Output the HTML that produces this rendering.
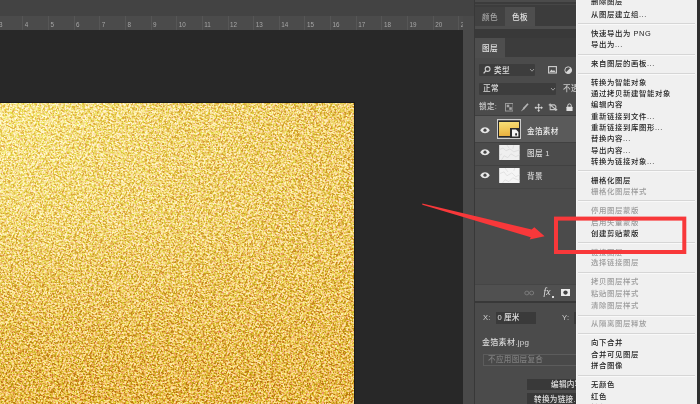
<!DOCTYPE html>
<html lang="zh-CN">
<head>
<meta charset="utf-8">
<title>创建剪贴蒙版</title>
<style>
*{box-sizing:border-box;margin:0;padding:0}
html,body{width:700px;height:404px;overflow:hidden;background:#4a4a4a}
body{position:relative;font-family:"Liberation Sans","Noto Sans CJK SC",sans-serif;font-size:8px;color:#d6d6d6}
.abs,.p{position:absolute}
#ui{position:absolute;left:0;top:0;width:700px;height:404px;will-change:transform}
#topbar{left:0;top:0;width:474px;height:16px;background:#434343}
#ruler{left:0;top:15.5px;width:463px;height:14.7px;background:#4b4b4b;overflow:hidden}
#ruler span{position:absolute;top:0;height:15px;font-size:6.3px;line-height:9px;color:#a6a6a6;padding:4.7px 0 0 1.5px;border-left:1px solid #565656}
#canvas{left:0;top:30px;width:463px;height:374px;background:#282828}
#gold{left:0;top:102px;width:355px;height:302px;border-top:1px solid #1a1a1a;border-right:1px solid #1a1a1a;overflow:hidden}
#strip{left:463px;top:15.5px;width:11px;height:389px;background:#494949}
#strip2{left:473.6px;top:0;width:2px;height:404px;background:#383838}
#panel{left:475px;top:0;width:225px;height:404px;background:#4b4b4b;overflow:hidden}
#panel .p{white-space:nowrap}
.t{line-height:12px;height:12px;font-weight:500;font-size:7.6px;letter-spacing:0.3px}
#menu{left:576.2px;top:0;width:120.8px;box-shadow:inset 1px 0 0 #f6f6f6;height:404px;background:#f0f0f0;color:#1c1c1c;font-size:7.4px;letter-spacing:0.6px;font-weight:500;overflow:hidden}
#menu div{position:absolute;left:14.8px;white-space:nowrap;line-height:12px;height:12px}
#menu div.d{color:#9c9c9c}
#menu i{position:absolute;left:2px;width:116.8px;height:1px;background:#d6d6d6;display:block;box-shadow:0 1px 0 #f9f9f9}
#edge{left:697px;top:0;width:3px;height:404px;background:#2f2f2f}
#anno{left:0;top:0;width:700px;height:404px}
</style>
</head>
<body>
<div id="ui">
<div id="topbar" class="abs"></div>
<div id="ruler" class="abs"><span style="left:-3.4px">3</span><span style="left:22.3px">4</span><span style="left:47.9px">5</span><span style="left:73.6px">6</span><span style="left:99.2px">7</span><span style="left:124.9px">8</span><span style="left:150.5px">9</span><span style="left:176.2px">10</span><span style="left:201.8px">11</span><span style="left:227.5px">12</span><span style="left:253.2px">13</span><span style="left:278.8px">14</span><span style="left:304.4px">15</span><span style="left:330.1px">16</span><span style="left:355.7px">17</span><span style="left:381.4px">18</span><span style="left:407.0px">19</span><span style="left:432.7px">20</span><span style="left:458.3px">21</span></div>
<div id="canvas" class="abs"></div>
<div id="gold" class="abs">
<svg width="354" height="301" viewBox="0 0 354 301" style="display:block">
<defs>
<radialGradient id="gr" cx="0" cy="0.05" r="1.05">
<stop offset="0" stop-color="#fff"/>
<stop offset="0.5" stop-color="#acacac"/>
<stop offset="0.93" stop-color="#767676"/>
<stop offset="1" stop-color="#6c6c6c"/>
</radialGradient>
<linearGradient id="gg" x1="0" y1="0" x2="0" y2="1">
<stop offset="0" stop-color="#000" stop-opacity="0"/>
<stop offset="0.39" stop-color="#000" stop-opacity="0.1"/>
<stop offset="0.7" stop-color="#000" stop-opacity="0.55"/>
<stop offset="0.93" stop-color="#000" stop-opacity="0.94"/>
<stop offset="1" stop-color="#000" stop-opacity="1"/>
</linearGradient>
<mask id="gm" maskUnits="userSpaceOnUse" x="0" y="0" width="354" height="301"><rect width="354" height="301" fill="url(#gr)"/><rect width="354" height="301" fill="url(#gg)"/></mask>
<filter id="gn" x="0" y="0" width="100%" height="100%" color-interpolation-filters="sRGB">
<feTurbulence type="fractalNoise" baseFrequency="0.68" numOctaves="2" seed="11" result="a"/>
<feTurbulence type="fractalNoise" baseFrequency="0.3" numOctaves="2" seed="5" result="b"/>
<feComposite in="a" in2="b" operator="arithmetic" k1="0" k2="0.88" k3="0.12" k4="0" result="n"/>
<feColorMatrix in="n" type="matrix" values="5.4 0 0 0 -2.2  3.5 1.9 0 0 -2.2  4.5 0 0.9 0 -2.2  0 0 0 0 1"/>
<feComponentTransfer>
<feFuncR type="table" tableValues="0.73 0.85 0.915 0.96 0.99"/>
<feFuncG type="table" tableValues="0.45 0.60 0.73 0.84 0.92"/>
<feFuncB type="table" tableValues="0.05 0.15 0.30 0.46 0.62"/>
<feFuncA type="linear" slope="0" intercept="1"/>
</feComponentTransfer>
</filter>
<filter id="gl" x="0" y="0" width="100%" height="100%" color-interpolation-filters="sRGB">
<feTurbulence type="fractalNoise" baseFrequency="0.68" numOctaves="2" seed="11" result="a"/>
<feTurbulence type="fractalNoise" baseFrequency="0.3" numOctaves="2" seed="5" result="b"/>
<feComposite in="a" in2="b" operator="arithmetic" k1="0" k2="0.88" k3="0.12" k4="0" result="n"/>
<feColorMatrix in="n" type="matrix" values="5.4 0 0 0 -2.2  3.5 1.9 0 0 -2.2  4.5 0 0.9 0 -2.2  0 0 0 0 1"/>
<feComponentTransfer>
<feFuncR type="table" tableValues="0.90 0.94 0.965 0.985 1"/>
<feFuncG type="table" tableValues="0.72 0.83 0.905 0.955 0.985"/>
<feFuncB type="table" tableValues="0.26 0.40 0.56 0.70 0.86"/>
<feFuncA type="linear" slope="0" intercept="1"/>
</feComponentTransfer>
</filter>
</defs>
<rect width="354" height="301" fill="#e6be50"/>
<g transform="rotate(27 177 150)"><rect x="-80" y="-110" width="520" height="520" filter="url(#gn)"/></g>
<g mask="url(#gm)"><g transform="rotate(27 177 150)"><rect x="-80" y="-110" width="520" height="520" filter="url(#gl)"/></g></g>
</svg>
</div>
<div id="strip" class="abs"></div>
<div id="strip2" class="abs"></div>
<div id="panel" class="abs">
<!-- coordinates inside panel: x = pageX-475 -->
<div class="p" style="left:0;top:1.8px;width:225px;height:1.8px;background:#3b3b3b"></div><div class="p" style="left:0;top:3.6px;width:225px;height:1.4px;background:#464646"></div><div class="p" style="left:0;top:5px;width:225px;height:2px;background:#3c3c3c"></div>
<div class="p" style="left:0;top:7px;width:225px;height:19px;background:#3c3c3c"></div>
<div class="p" style="left:0;top:7px;width:30px;height:19px;background:#414141"></div>
<div class="p" style="left:30px;top:7px;width:30px;height:22px;background:#4e4e4e"></div>
<div class="p t" style="left:7px;top:11.5px;color:#a8a8a8">颜色</div>
<div class="p t" style="left:37px;top:11.5px;color:#e4e4e4">色板</div>
<div class="p" style="left:0;top:26px;width:225px;height:3px;background:#4d4d4d"></div>
<div class="p" style="left:0;top:29px;width:225px;height:9px;background:#393939"></div>
<div class="p" style="left:0;top:38px;width:225px;height:19px;background:#3c3c3c"></div>
<div class="p" style="left:0;top:38px;width:30px;height:20px;background:#4e4e4e"></div>
<div class="p t" style="left:7px;top:42.5px;color:#e4e4e4">图层</div>
<!-- filter row -->
<div class="p" style="left:4px;top:64px;width:56px;height:12px;background:#3d3d3d;border-radius:1px"></div>
<svg class="p" style="left:7px;top:65px" width="10" height="10" viewBox="0 0 10 10"><circle cx="5.6" cy="4" r="2.4" fill="none" stroke="#d0d0d0" stroke-width="1.1"/><path d="M3.8 5.8 1.6 8.4" stroke="#d0d0d0" stroke-width="1.3" fill="none"/></svg>
<div class="p t" style="left:19px;top:64.5px;color:#dcdcdc">类型</div>
<svg class="p" style="left:54.2px;top:68px" width="6" height="5" viewBox="0 0 6 5"><path d="M1 1 3 3.2 5 1" stroke="#9a9a9a" stroke-width="1" fill="none"/></svg>
<svg class="p" style="left:73px;top:66px" width="9" height="8" viewBox="0 0 9 8"><rect x="0.6" y="0.6" width="7.8" height="6.4" fill="none" stroke="#d0d0d0" stroke-width="1.1"/><path d="M1.5 6 3.5 3.5 5 5 6 4 7.5 6Z" fill="#d0d0d0"/></svg>
<svg class="p" style="left:88.5px;top:65.8px" width="8.4" height="8.4" viewBox="0 0 9 9"><circle cx="4.5" cy="4.5" r="3.6" fill="none" stroke="#d8d8d8" stroke-width="1"/><path d="M1.9 7.1A3.6 3.6 0 0 0 7.1 1.9Z" fill="#d8d8d8"/></svg>
<!-- blend row -->
<div class="p" style="left:4px;top:83px;width:77px;height:12px;background:#3d3d3d;border-radius:1px"></div>
<div class="p t" style="left:8px;top:83px;color:#dcdcdc">正常</div>
<svg class="p" style="left:75px;top:87px" width="6" height="5" viewBox="0 0 6 5"><path d="M1 1 3 3.2 5 1" stroke="#9a9a9a" stroke-width="1" fill="none"/></svg>
<div class="p t" style="left:88px;top:83px;color:#c8c8c8">不透明度:</div>
<!-- lock row -->
<div class="p t" style="left:4px;top:101px;color:#c8c8c8">锁定:</div>
<svg class="p" style="left:29.5px;top:103px" width="8.5" height="8.5" viewBox="0 0 9 9"><rect x="0.5" y="0.5" width="8" height="8" fill="none" stroke="#9c9c9c" stroke-width="1"/><rect x="1.8" y="1.8" width="2.7" height="2.7" fill="#a8a8a8"/><rect x="4.5" y="4.5" width="2.7" height="2.7" fill="#a8a8a8"/></svg>
<svg class="p" style="left:45px;top:102.5px" width="9" height="9" viewBox="0 0 9 9"><path d="M8 0.8 3.6 5.6" stroke="#b4b4b4" stroke-width="1.7" fill="none"/><path d="M3.6 4.6 0.8 8.6 4.6 6Z" fill="#b4b4b4"/></svg>
<svg class="p" style="left:59px;top:103px" width="9.4" height="9.4" viewBox="0 0 10 10"><path d="M5 0.5 6.6 2.4H5.5V4.5H7.6V3.4L9.5 5 7.6 6.6V5.5H5.5V7.6H6.6L5 9.5 3.4 7.6H4.5V5.5H2.4V6.6L0.5 5 2.4 3.4V4.5H4.5V2.4H3.4Z" fill="#d8d8d8"/></svg>
<svg class="p" style="left:73px;top:103px" width="10" height="8.5" viewBox="0 0 10 9"><path d="M2 0.5V7H9.5M0.5 2H6.5L8 3.5V8.5M2.5 2.4 7.6 6.6" stroke="#c4c4c4" stroke-width="1.1" fill="none"/></svg>
<svg class="p" style="left:90.7px;top:102.7px" width="7" height="8.8" viewBox="0 0 8 10"><rect x="0.5" y="4.2" width="7" height="5.3" rx="0.6" fill="#e0e0e0"/><path d="M2 4.5V3A2 2 0 0 1 6 3V4.5" stroke="#e0e0e0" stroke-width="1.1" fill="none"/></svg>
<div class="p" style="left:0;top:115px;width:225px;height:1px;background:#3f3f3f"></div>
<!-- layer rows -->
<div class="p" style="left:0;top:116px;width:225px;height:26px;background:#5a5a5a"></div>
<div class="p" style="left:0;top:142px;width:225px;height:1px;background:#414141"></div>
<div class="p" style="left:0;top:165px;width:225px;height:1px;background:#414141"></div>
<div class="p" style="left:0;top:188px;width:225px;height:1px;background:#454545"></div>
<svg class="p" style="left:5px;top:127.3px" width="10" height="6.4" viewBox="0 0 10 6.4"><path d="M0.2 3.2C1.8 0.8 3.4 0.2 5 0.2S8.2 0.8 9.8 3.2C8.2 5.6 6.6 6.2 5 6.2S1.8 5.6 0.2 3.2Z" fill="#e8e8e8"/><circle cx="5" cy="3.2" r="1.6" fill="#484848"/></svg>
<svg class="p" style="left:5px;top:149.4px" width="10" height="6.4" viewBox="0 0 10 6.4"><path d="M0.2 3.2C1.8 0.8 3.4 0.2 5 0.2S8.2 0.8 9.8 3.2C8.2 5.6 6.6 6.2 5 6.2S1.8 5.6 0.2 3.2Z" fill="#e8e8e8"/><circle cx="5" cy="3.2" r="1.6" fill="#484848"/></svg>
<svg class="p" style="left:5px;top:172.2px" width="10" height="6.4" viewBox="0 0 10 6.4"><path d="M0.2 3.2C1.8 0.8 3.4 0.2 5 0.2S8.2 0.8 9.8 3.2C8.2 5.6 6.6 6.2 5 6.2S1.8 5.6 0.2 3.2Z" fill="#e8e8e8"/><circle cx="5" cy="3.2" r="1.6" fill="#484848"/></svg>
<!-- thumbs -->
<div class="p" style="left:21.5px;top:119.2px;width:24.8px;height:19.4px;border:1px solid #cdcdcd;background:#5a5a5a;padding:0.8px"><div style="width:100%;height:100%;border:1px solid #2a2a2a;background:linear-gradient(175deg,#f7df78,#f0c555 55%,#e8ab3a)"></div></div>
<svg class="p" style="left:35px;top:127.6px" width="10" height="10" viewBox="0 0 10 10"><rect width="10" height="10" fill="#2c2c2c"/><path d="M2 1.6H6L8.4 4V8.6H2Z" fill="#f4f4f4"/><path d="M5.2 5.2H7V7.4H5.2Z" fill="#2c2c2c"/></svg>
<svg class="p" style="left:24px;top:144.7px" width="20.8" height="15.6" viewBox="0 0 21 16"><rect width="21" height="16" fill="#efefef"/><path d="M0 5 4 3 7 6 11 4 15 7 21 5M2 16 5 11 9 13 12 9 17 12 21 10M8 0 10 3M15 0 14 4M0 11 3 9" stroke="#dadada" stroke-width="0.8" fill="none"/></svg>
<svg class="p" style="left:24px;top:167.7px" width="20.8" height="15.6" viewBox="0 0 21 16"><rect width="21" height="16" fill="#f5f5f5"/><path d="M0 6 5 4 8 8 13 5 17 9 21 7M3 16 6 12 10 14 14 10 21 13M6 0 9 4M16 0 15 3" stroke="#dedede" stroke-width="0.8" fill="none"/></svg>
<div class="p t" style="left:52px;top:126px;color:#ececec">金箔素材</div>
<div class="p t" style="left:52px;top:147.5px;color:#dcdcdc">图层 1</div>
<div class="p t" style="left:52px;top:170.5px;color:#dcdcdc">背景</div>
<!-- bottom bar -->
<div class="p" style="left:0;top:284px;width:225px;height:1px;background:#454545"></div>
<div class="p" style="left:0;top:285px;width:225px;height:16px;background:#505050"></div>
<div class="p" style="left:0;top:300.5px;width:225px;height:2.2px;background:#383838"></div>
<svg class="p" style="left:49px;top:289.7px" width="10.5" height="6" viewBox="0 0 12 7"><ellipse cx="3.2" cy="3.5" rx="2.4" ry="2.2" fill="none" stroke="#7c7c7c" stroke-width="1.1"/><ellipse cx="8.8" cy="3.5" rx="2.4" ry="2.2" fill="none" stroke="#7c7c7c" stroke-width="1.1"/></svg>
<div class="p" style="left:68.5px;top:286px;font:italic 9.5px/13px 'Liberation Serif',serif;color:#e0e0e0">fx</div>
<div class="p" style="left:76.5px;top:295.5px;width:2px;height:2px;background:#ddd"></div>
<svg class="p" style="left:86.3px;top:288.9px" width="9" height="7.2" viewBox="0 0 10 8"><rect width="10" height="8" fill="#ececec"/><circle cx="5" cy="4" r="2.4" fill="#444"/></svg>
<!-- properties -->
<div class="p t" style="left:8px;top:312px;color:#d0d0d0">X:</div>
<div class="p" style="left:21px;top:312px;width:40px;height:12px;background:#3a3a3a"></div>
<div class="p t" style="left:22.5px;top:312px;color:#e4e4e4;word-spacing:-0.5px">0 厘米</div>
<div class="p t" style="left:87px;top:312px;color:#d0d0d0">Y:</div>
<div class="p" style="left:99px;top:312px;width:40px;height:12px;background:#3a3a3a"></div>
<div class="p t" style="left:7px;top:337px;color:#d8d8d8;font-size:8px">金箔素材.jpg</div>
<div class="p" style="left:8px;top:354px;width:140px;height:12px;border:1px solid #5c5c5c;background:#494949"></div>
<div class="p t" style="left:13px;top:354px;color:#7e7e7e">不应用图层复合</div>
<div class="p" style="left:52px;top:379px;width:120px;height:11px;background:#393939"></div>
<div class="p t" style="left:76px;top:378.5px;color:#e0e0e0">编辑内容</div>
<div class="p" style="left:52px;top:393px;width:120px;height:12px;background:#393939"></div>
<div class="p t" style="left:59px;top:394px;color:#e0e0e0">转换为链接...</div>
</div>
<div id="menu" class="abs">
<div style="top:-3.9px">删除图层</div>
<div style="top:8.9px">从图层建立组...</div>
<i style="top:22.7px"></i>
<div style="top:27.9px">快速导出为 PNG</div>
<div style="top:39.3px">导出为...</div>
<i style="top:53.5px"></i>
<div style="top:58.1px">来自图层的画板...</div>
<i style="top:73.3px"></i>
<div style="top:76.9px">转换为智能对象</div>
<div style="top:88.2px">通过拷贝新建智能对象</div>
<div style="top:99.1px">编辑内容</div>
<div style="top:110.9px">重新链接到文件...</div>
<div style="top:122.3px">重新链接到库图形...</div>
<div style="top:133.1px">替换内容...</div>
<div style="top:144.8px">导出内容...</div>
<div style="top:156.1px">转换为链接对象...</div>
<i style="top:170.4px"></i>
<div style="top:174.7px">栅格化图层</div>
<div class="d" style="top:186.0px">栅格化图层样式</div>
<i style="top:200.3px"></i>
<div class="d" style="top:205.3px">停用图层蒙版</div>
<div class="d" style="top:216.9px">启用矢量蒙版</div>
<div style="top:228.0px">创建剪贴蒙版</div>
<i style="top:242.0px"></i>
<div class="d" style="top:246.5px">链接图层</div>
<div class="d" style="top:256.9px">选择链接图层</div>
<i style="top:272.4px"></i>
<div class="d" style="top:276.0px">拷贝图层样式</div>
<div class="d" style="top:288.0px">粘贴图层样式</div>
<div class="d" style="top:299.5px">清除图层样式</div>
<i style="top:314.5px"></i>
<div class="d" style="top:318.3px">从隔离图层释放</div>
<i style="top:333.0px"></i>
<div style="top:337.0px">向下合并</div>
<div style="top:348.7px">合并可见图层</div>
<div style="top:360.0px">拼合图像</div>
<i style="top:374.8px"></i>
<div style="top:378.9px">无颜色</div>
<div style="top:390.9px">红色</div>
<div style="top:401.9px">橙色</div>
</div>
<div id="edge" class="abs"></div>
<svg id="anno" class="abs" viewBox="0 0 700 404">
<rect x="556" y="218.6" width="128.3" height="33.4" fill="none" stroke="#f8383a" stroke-width="4"/>
<path d="M422.3 203.6 L531.6 229.4 L534.3 227.2 L544.6 236.3 L529.6 239.5 L530.8 237.3 L422.3 204.8Z" fill="#f8383a"/>
</svg>
</div>
</body>
</html>
